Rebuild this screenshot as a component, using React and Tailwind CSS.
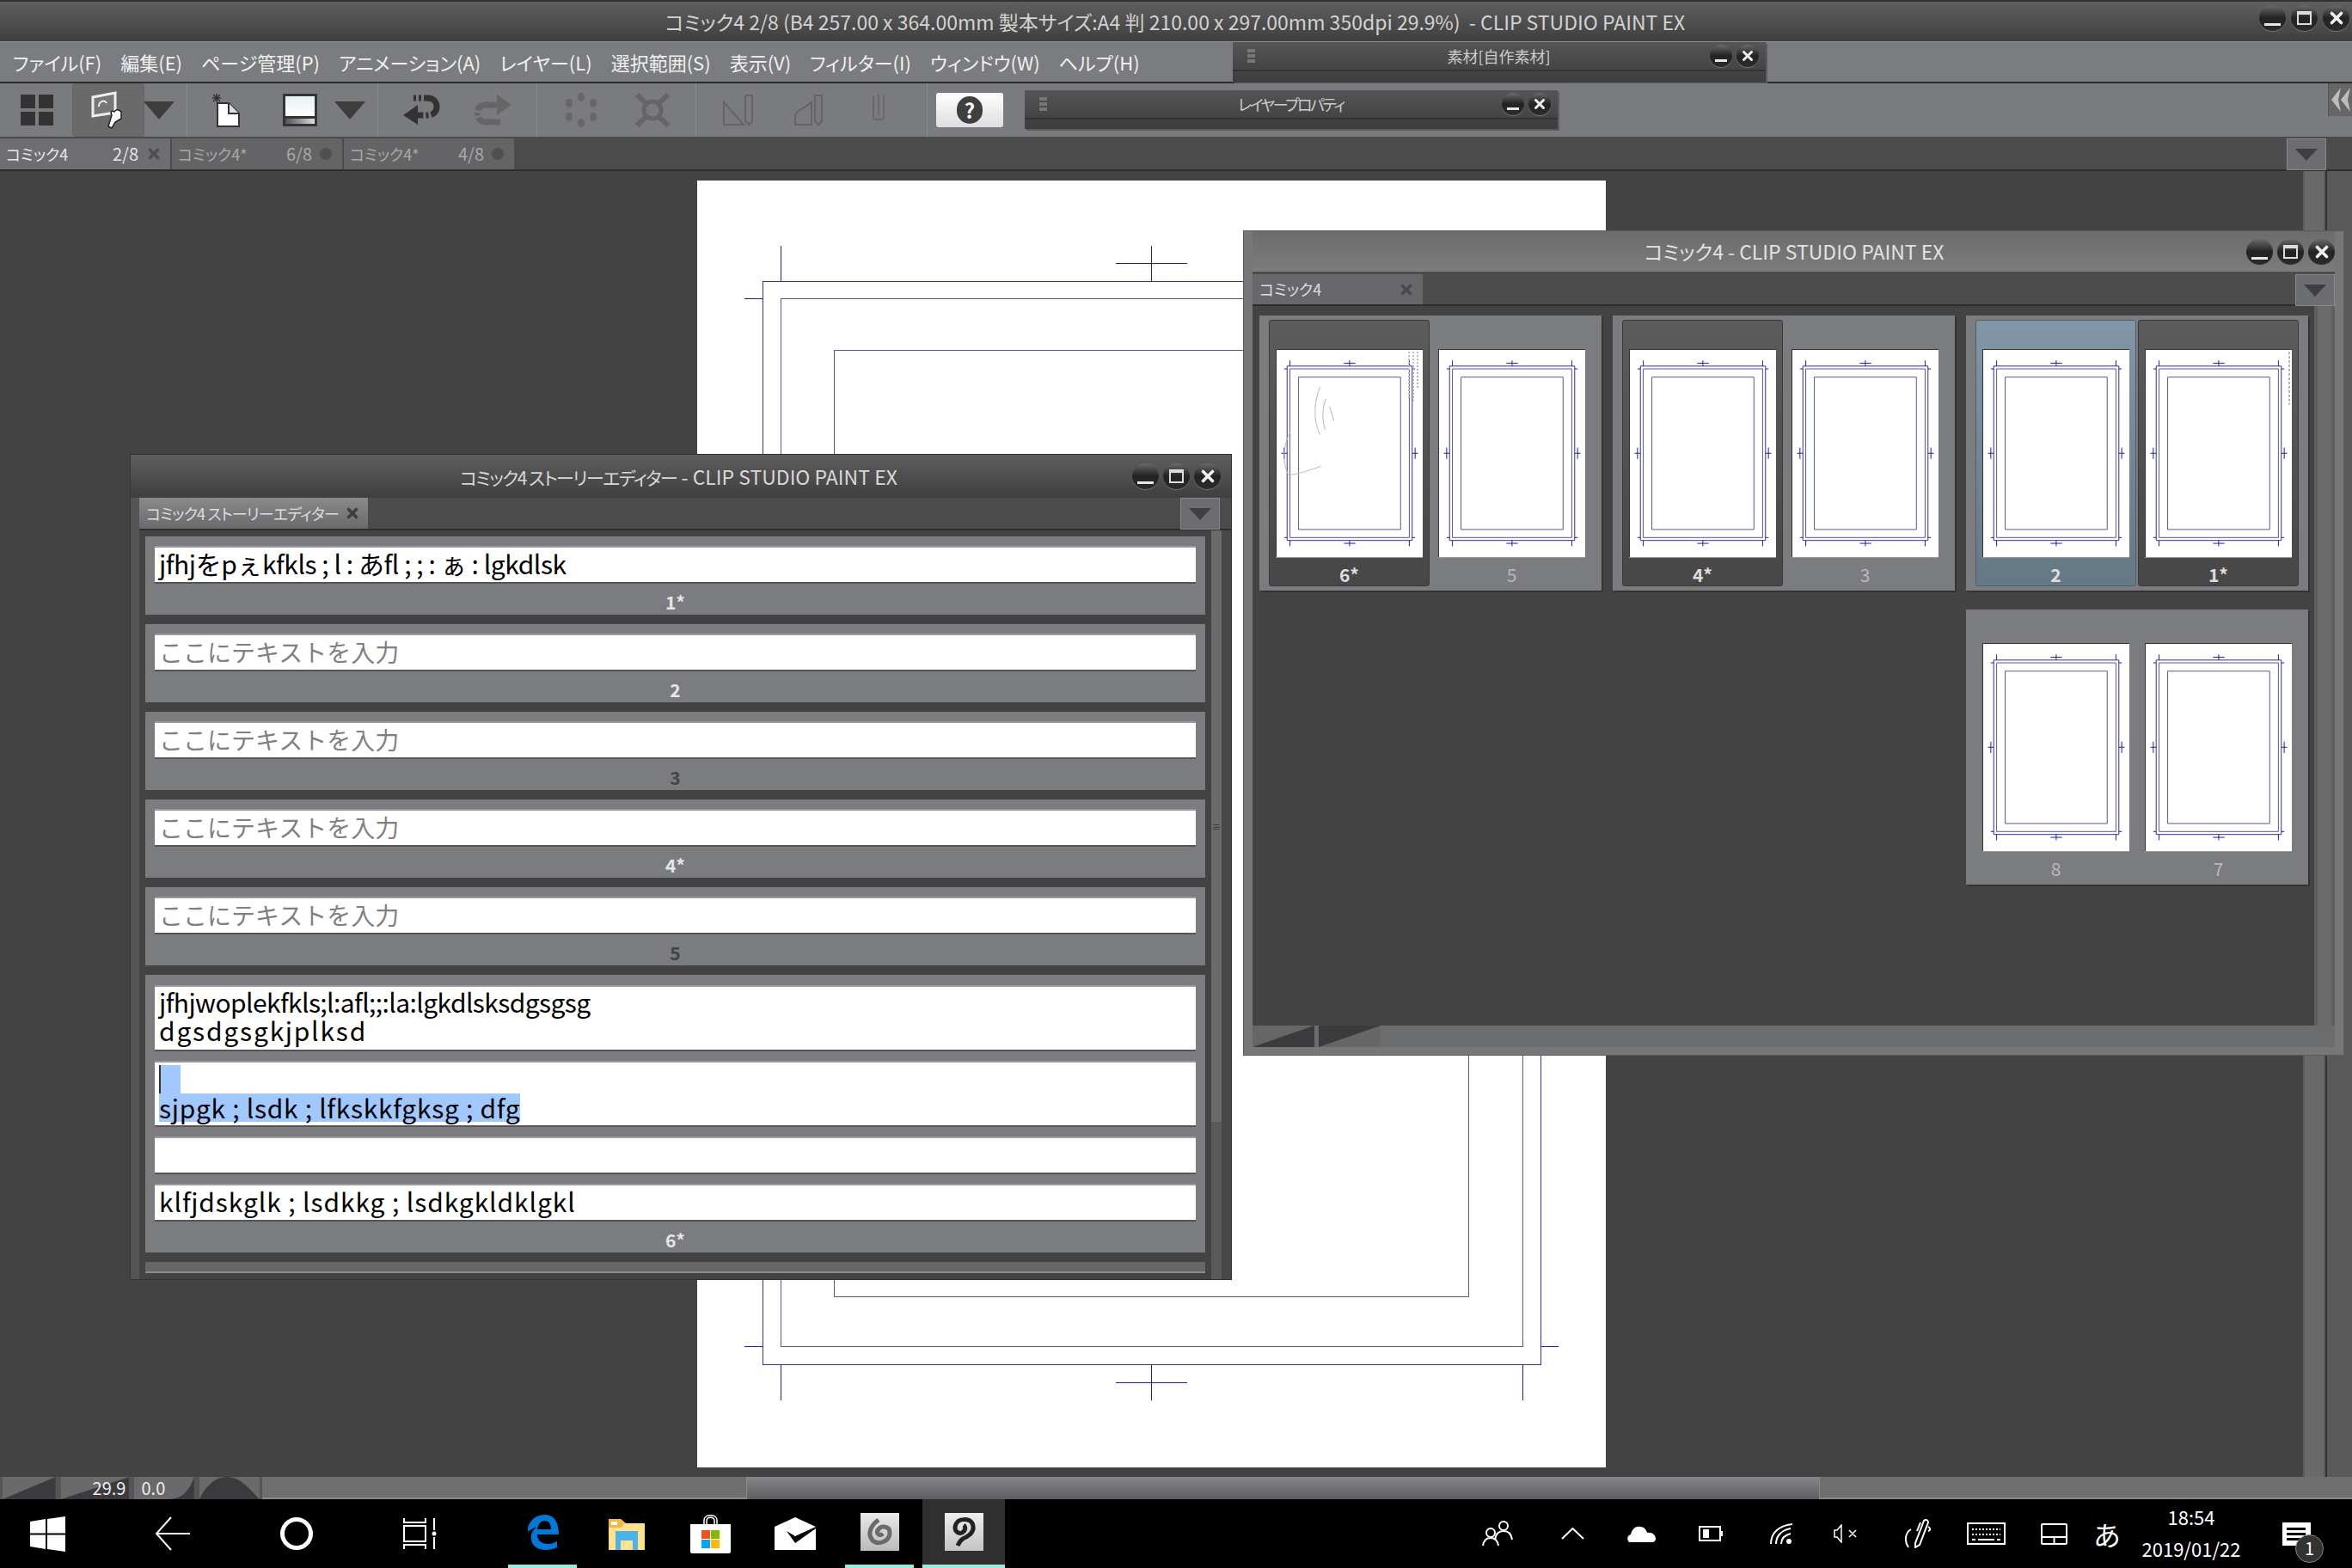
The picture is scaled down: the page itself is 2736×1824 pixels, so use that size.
import { X } from "lucide-react";

const menus = ["ファイル(F)", "編集(E)", "ページ管理(P)", "アニメーション(A)", "レイヤー(L)", "選択範囲(S)", "表示(V)", "フィルター(I)", "ウィンドウ(W)", "ヘルプ(H)"];

const storyPages = [
  { label: "1*", bright: true, text: "jfhjをpぇkfkls ; l : あfl ; ; : ぁ : lgkdlsk" },
  { label: "2", bright: true },
  { label: "3" },
  { label: "4*", bright: true },
  { label: "5" },
];

const spreads = [
  [{ n: "6*", tone: "dark", scribble: true }, { n: "5" }],
  [{ n: "4*", tone: "dark" }, { n: "3" }],
  [{ n: "2", tone: "blue" }, { n: "1*", tone: "dark", noise: true }],
];

function PageMarks() {
  const tick = { stroke: "#20208f", strokeWidth: 1, vectorEffect: "non-scaling-stroke", fill: "none" };
  const mid = { stroke: "#58588c", strokeWidth: 1, vectorEffect: "non-scaling-stroke", fill: "none" };
  return (
    <svg viewBox="0 0 1057 1497" preserveAspectRatio="none" className="absolute inset-0 h-full w-full" shapeRendering="crispEdges">
      <rect x="76" y="117" width="905" height="1260" {...tick} stroke="#30309a" />
      <rect x="97" y="137" width="863" height="1219" {...mid} />
      <rect x="159" y="197" width="738" height="1101" {...mid} />
      <path {...tick} d="M97 76V117M960 76V117M97 1377V1419M960 1377V1419" />
      <path {...tick} d="M55 137H76M981 137H1002M55 1356H76M981 1356H1002" />
      <path {...tick} d="M528 76V117M487 96H570M528 1377V1419M487 1398H570" />
      <path {...tick} d="M55 706V788M34 747H76M1002 706V788M981 747H1023" />
    </svg>
  );
}

function WinBtn({ kind, size = 31 }) {
  const box = size === 31 ? "h-[30px] w-[31px]" : "h-[26px] w-[26px]";
  return (
    <div className={`${box} relative shrink-0 rounded-full bg-linear-to-b from-[#6b6b6b] via-[#232323] to-[#2c2c2c] shadow-[0_1px_1px_#777]`}>
      {kind === "min" && <div className="absolute inset-x-[6px] bottom-[6px] h-[3px] bg-[#e8e8e8]" />}
      {kind === "max" && <div className="absolute inset-[7px] border-2 border-t-[4px] border-[#ddd]" />}
      {kind === "close" && (
        <div className="absolute inset-0 flex items-center justify-center">
          <X size={size === 31 ? 22 : 18} strokeWidth={4} color="#eee" />
        </div>
      )}
    </div>
  );
}

function DropBtn() {
  return (
    <div className="flex h-[37px] w-[46px] items-center justify-center border border-[#88898c] bg-[#6c6d70]">
      <div className="h-0 w-0 border-x-[13px] border-t-[14px] border-x-transparent border-t-[#3f3f3f]" />
    </div>
  );
}

function Triangle() {
  return <div className="h-0 w-0 border-x-[18px] border-t-[21px] border-x-transparent border-t-[#3d3d3d]" />;
}

function Sep() {
  return <div className="h-[62px] w-px bg-[#8a8b8e]" />;
}

function ToolWindow({ title, className, titleClass = "" }) {
  return (
    <div className={`absolute w-[620px] bg-linear-to-b from-[#555] to-[#3d3d3d] shadow-[2px_2px_0_#5c5c5c] ${className}`}>
      <div className="flex h-[34px] items-center border-b-2 border-[#333] pr-[8px] pl-[17px]">
        <div className="flex flex-col gap-[2px]">
          <div className="h-[4px] w-[9px] bg-[#777]" />
          <div className="h-[4px] w-[9px] bg-[#777]" />
          <div className="h-[4px] w-[9px] bg-[#777]" />
        </div>
        <div className={`flex-1 pl-[38px] text-center text-[18px] text-[#ccc] ${titleClass}`}>{title}</div>
        <div className="flex gap-[5px]">
          <WinBtn kind="min" size={26} />
          <WinBtn kind="close" size={26} />
        </div>
      </div>
    </div>
  );
}

function Wedge({ flip }) {
  return (
    <svg viewBox="0 0 70 24" preserveAspectRatio="none" className="absolute inset-0 h-full w-full">
      <polygon points={flip ? "0,0 70,0 0,24" : "0,24 70,0 70,24"} fill="#3b3b3d" />
    </svg>
  );
}

function StoryInput({ tall, children }) {
  return (
    <div
      className={`shrink-0 border-t-2 border-b-2 border-t-[#9a9a9a] border-b-[#555] bg-white pl-[5px] text-[30px] text-black [font-feature-settings:normal] ${tall ? "h-[77px] leading-[33px]" : "h-[44px] leading-[36px]"}`}
    >
      {children}
    </div>
  );
}

function StoryLabel({ children, bright }) {
  return (
    <div className={`text-center text-[21px] leading-[42px] font-bold ${bright ? "text-[#e6e6e6]" : "text-[#444]"}`}>{children}</div>
  );
}

function StoryEditor() {
  return (
    <div className="absolute top-[529px] left-[152px] flex h-[959px] w-[1280px] flex-col bg-[#555] shadow-[0_0_0_1px_#333]">
      <div className="flex h-[50px] items-center justify-between bg-linear-to-b from-[#5e5e5e] to-[#3f3f3f] pr-[12px]">
        <div className="flex-1 pl-[110px] text-center text-[23px] whitespace-nowrap text-[#d8d8d8]">
          <span className="text-[21px] tracking-[-1.5px]">コミック4 ストーリーエディター</span> - CLIP STUDIO PAINT EX
        </div>
        <div className="flex gap-[5px]">
          <WinBtn kind="min" />
          <WinBtn kind="max" />
          <WinBtn kind="close" />
        </div>
      </div>
      <div className="ml-[10px] flex h-[38px] justify-between border-b-2 border-[#2e2e2e] bg-[#4c4c4c] pr-[13px]">
        <div className="flex w-[266px] items-center justify-between bg-linear-to-b from-[#8a8a8c] to-[#6a6a6d] pr-[9px] pl-[8px] text-[18px] whitespace-nowrap text-[#ddd]">
          <span className="tracking-[-0.8px]">コミック4 ストーリーエディター</span>
          <X size={18} strokeWidth={5} color="#3f3f3f" />
        </div>
        <DropBtn />
      </div>
      <div className="ml-[10px] flex flex-1 bg-[#434343]">
        <div className="flex flex-1 flex-col gap-[11px] pt-[7px] pr-[7px] pl-[7px]">
          {storyPages.map((p) => (
            <div key={p.label} className="h-[91px] bg-[#7b7c80] px-[11px] pt-[11px]">
              <StoryInput>
                {p.text ? (
                  <span className="tracking-[-0.45px]">{p.text}</span>
                ) : (
                  <span className="text-[28px] text-[#808080]">ここにテキストを入力</span>
                )}
              </StoryInput>
              <StoryLabel bright={p.bright}>{p.label}</StoryLabel>
            </div>
          ))}
          <div className="flex h-[323px] flex-col gap-[11px] bg-[#7b7c80] px-[11px] pt-[12px]">
            <StoryInput tall>
              <div className="pt-[1px] tracking-[-0.6px]">jfhjwoplekfkls;l:afl;;:la:lgkdlsksdgsgsg</div>
              <div className="tracking-[1.8px]">dgsdgsgkjplksd</div>
            </StoryInput>
            <StoryInput tall>
              <div className="pt-[3px]">
                <div className="h-[33px] w-[25px] border-l-2 border-[#333] bg-[#a1c8ff]" />
                <div className="h-[33px] w-fit bg-[#a1c8ff] tracking-[0.7px]">sjpgk ; lsdk ; lfkskkfgksg ; dfg</div>
              </div>
            </StoryInput>
            <StoryInput />
            <StoryInput>
              <span className="tracking-[0.9px]">klfjdskglk ; lsdkkg ; lsdkgkldklgkl</span>
            </StoryInput>
            <div className="-mt-[11px] shrink-0">
              <StoryLabel bright>6*</StoryLabel>
            </div>
          </div>
          <div className="h-[13px] border-b-2 border-[#8a8a8a] bg-[#666]" />
        </div>
        <div className="flex w-[23px] flex-col border-r-[11px] border-[#484848] bg-[#5a5a5a]">
          <div className="flex h-[688px] items-center justify-center bg-[#6a6a6a] text-[10px] text-[#333]">≡</div>
        </div>
      </div>
    </div>
  );
}

function Thumb({ n, tone, scribble, noise }) {
  const pad =
    tone === "dark"
      ? "bg-linear-to-b from-[#5c5c5c] to-[#474747] border-[#3a3a3a]"
      : tone === "blue"
        ? "bg-linear-to-b from-[#8297a5] to-[#647886] border-[#4f5f68]"
        : "border-transparent";
  return (
    <div className={`h-[310px] w-[187px] rounded-[3px] border px-[7px] pt-[33px] ${pad}`}>
      <div className="relative h-[242px] w-[171px] border-t border-l border-[#333] bg-white shadow-[0_1px_0_#999]">
        <PageMarks />
        {scribble && (
          <svg viewBox="0 0 171 242" className="absolute inset-0 h-full w-full" fill="none" stroke="#b5b5b5" strokeWidth="1">
            <path d="M51 43C43 62 43 84 51 99M58 57C53 68 53 82 57 93M62 66C64 72 66 78 67 83M16 96C7 112 7 135 14 146C24 146 40 140 52 136" />
            <path d="M155 2V55M160 2V60M165 2V45" strokeDasharray="2 2" strokeWidth="2" />
          </svg>
        )}
        {noise && (
          <svg viewBox="0 0 171 242" className="absolute inset-0 h-full w-full" fill="none" stroke="#b5b5b5">
            <path d="M168 2V64" strokeDasharray="3 2" strokeWidth="2" />
          </svg>
        )}
      </div>
      <div className={`mt-[6px] text-center text-[21px] leading-[28px] ${tone ? "font-bold text-[#ddd]" : "text-[#b8b8b8]"}`}>{n}</div>
    </div>
  );
}

function Spread({ pages }) {
  return (
    <div className="flex h-[320px] w-[398px] gap-[2px] bg-[#7b7c80] pt-[5px] pl-[11px] shadow-[2px_2px_0_#333]">
      {pages.map((p) => (
        <Thumb key={p.n} {...p} />
      ))}
    </div>
  );
}

function PageManager() {
  return (
    <div className="absolute top-[269px] left-[1447px] flex h-[958px] w-[1279px] flex-col bg-[#777] pr-[10px] pb-[9px] pl-[10px] shadow-[0_0_0_1px_#5a5a5a]">
      <div className="flex h-[47px] items-center bg-linear-to-b from-[#6c6c6c] to-[#7c7c7c]">
        <div className="flex-1 pl-[104px] text-center text-[23px] text-[#e2e2e2]">コミック4 - CLIP STUDIO PAINT EX</div>
        <div className="flex gap-[5px]">
          <WinBtn kind="min" />
          <WinBtn kind="max" />
          <WinBtn kind="close" />
        </div>
      </div>
      <div className="flex h-[40px] justify-between border-b-2 border-[#2e2e2e] bg-[#4c4c4c] pt-[3px]">
        <div className="flex w-[198px] items-center justify-between bg-[#68686c] pr-[10px] pl-[8px] text-[18px] text-[#ddd]">
          <span>コミック4</span>
          <X size={18} strokeWidth={5} color="#4a4a4a" />
        </div>
        <DropBtn />
      </div>
      <div className="flex flex-1">
        <div className="flex flex-1 flex-col gap-[22px] bg-[#434343] pt-[11px] pl-[8px]">
          <div className="flex gap-[13px]">
            {spreads.map((s) => (
              <Spread key={s[0].n} pages={s} />
            ))}
          </div>
          <div className="flex justify-end pr-[7px]">
            <Spread pages={[{ n: "8" }, { n: "7" }]} />
          </div>
        </div>
        <div className="w-[24px] border-x-4 border-[#5f5f5f] bg-[#6b6b6b]" />
      </div>
      <div className="flex h-[25px] bg-[#6b6c6e]">
        <div className="relative h-full w-[72px] bg-[#666]">
          <Wedge />
        </div>
        <div className="relative ml-[5px] h-full w-[72px] bg-[#666]">
          <Wedge flip />
        </div>
      </div>
    </div>
  );
}

function Toolbar() {
  return (
    <div className="relative flex h-[62px] items-center bg-[#7a7b7f] pl-[24px]">
      <div className="grid grid-cols-2 gap-[4px]">
        {[0, 1, 2, 3].map((i) => (
          <div key={i} className="h-[16px] w-[17px] bg-[#333]" />
        ))}
      </div>
      <div className="ml-[22px] flex h-[62px] w-[84px] items-center justify-center rounded-[3px] border border-[#666] bg-[#6a6a6a]">
        <svg width="40" height="44" viewBox="0 0 40 44">
          <path d="M2 7L28 2V25L2 29Z" fill="#777" stroke="#eee" strokeWidth="3" />
          <path d="M9 18C9 11 16 10 18 14" fill="none" stroke="#eee" strokeWidth="2" />
          <path d="M20 41L24 28C22 24 24 22 27 24C29 20 33 22 35 24L35 32L28 36L24 43Z" fill="#fff" stroke="#222" strokeWidth="1.5" />
        </svg>
      </div>
      <div className="flex w-[34px] justify-center">
        <Triangle />
      </div>
      <div className="ml-[15px]">
        <Sep />
      </div>
      <svg className="ml-[27px]" width="36" height="40" viewBox="0 0 36 40">
        <path d="M8 12H21L33 24V39H8Z" fill="#fff" stroke="#333" strokeWidth="2" />
        <path d="M21 12V24H33" fill="#ddd" stroke="#333" strokeWidth="2" />
        <path d="M7 1V11M2 6H12M3 2L11 10M11 2L3 10" stroke="#333" strokeWidth="1.5" />
      </svg>
      <div className="ml-[48px] flex h-[38px] w-[40px] flex-col bg-[#333] p-[3px]">
        <div className="flex-1 bg-linear-to-b from-[#e6f1f5] to-white" />
        <div className="mt-[3px] h-[6px] bg-linear-to-r from-[#555] to-[#ddd]" />
      </div>
      <div className="ml-[20px]">
        <Triangle />
      </div>
      <div className="ml-[14px]">
        <Sep />
      </div>
      <svg className="ml-[27px]" width="46" height="36" viewBox="0 0 46 36">
        <path d="M14 4H30C38 4 41 9 41 14C41 20 37 24 30 24H17" fill="none" stroke="#333" strokeWidth="7" strokeDasharray="3 3 3 3 30 0" />
        <path d="M19 12L2 24L19 35Z" fill="#333" />
      </svg>
      <svg className="ml-[39px]" width="44" height="36" viewBox="0 0 44 36">
        <path d="M30 12H14C6 12 3 17 3 22C3 28 7 32 14 32H30" fill="none" stroke="#656565" strokeWidth="7" strokeDasharray="26 0 3 3 3 3" />
        <path d="M26 0L43 12L26 24Z" fill="#656565" />
      </svg>
      <div className="ml-[28px]">
        <Sep />
      </div>
      <svg className="ml-[32px]" width="38" height="40" viewBox="0 0 38 40" fill="#666">
        <ellipse cx="19" cy="5" rx="4" ry="5" />
        <ellipse cx="19" cy="35" rx="4" ry="5" />
        <ellipse cx="5" cy="12" rx="4" ry="5" />
        <ellipse cx="33" cy="12" rx="4" ry="5" />
        <ellipse cx="5" cy="28" rx="4" ry="5" />
        <ellipse cx="33" cy="28" rx="4" ry="5" />
      </svg>
      <svg className="ml-[44px]" width="40" height="40" viewBox="0 0 40 40" fill="none" stroke="#656565" strokeWidth="5">
        <circle cx="20" cy="20" r="10" />
        <path d="M2 2L12 12M38 2L28 12M2 38L12 28M38 38L28 28" strokeWidth="6" />
      </svg>
      <div className="ml-[30px]">
        <Sep />
      </div>
      <svg className="ml-[31px]" width="36" height="38" viewBox="0 0 36 38" fill="none" stroke="#656565" strokeWidth="2">
        <path d="M1 36V10L24 36ZM26 2H34V32L30 36L26 32Z" />
      </svg>
      <svg className="ml-[47px]" width="36" height="38" viewBox="0 0 36 38" fill="none" stroke="#656565" strokeWidth="2">
        <path d="M1 36V26C1 20 10 18 20 10V36ZM24 2H32V32L28 36L24 32Z" />
      </svg>
      <svg className="ml-[54px]" width="16" height="40" viewBox="0 0 16 40" fill="none" stroke="#696969" strokeWidth="2">
        <path d="M2 3V28C2 32 14 32 14 28V3M8 2V26" />
      </svg>
      <div className="ml-[48px]">
        <Sep />
      </div>
      <div className="ml-[10px] flex h-[40px] w-[78px] items-center justify-center rounded-[3px] bg-linear-to-b from-white to-[#dedede]">
        <div className="flex h-[32px] w-[30px] items-center justify-center rounded-full bg-[#3f3f3f] text-[24px] leading-none font-bold text-white">?</div>
      </div>
      <ToolWindow title="レイヤープロパティ" titleClass="tracking-[-2.5px]" className="top-[8px] left-[1192px] h-[45px]" />
      <div className="absolute top-0 right-0 flex h-[38px] w-[28px] items-center justify-center border-l border-[#555] bg-[#666]">
        <svg width="22" height="28" viewBox="0 0 22 28" fill="#bdbdbd">
          <path d="M11 0L0 14L11 28L8 14ZM22 0L11 14L22 28L19 14Z" />
        </svg>
      </div>
    </div>
  );
}

function TabBar() {
  const tabs = [
    { name: "コミック4", page: "2/8", on: true },
    { name: "コミック4*", page: "6/8" },
    { name: "コミック4*", page: "4/8" },
  ];
  return (
    <div className="flex h-[40px] justify-between border-b-2 border-[#2e2e2e] bg-[#4c4c4c] pt-[2px] pr-[30px]">
      <div className="flex gap-[2px]">
        {tabs.map((t, i) => (
          <div key={i} className={`flex w-[198px] items-center pr-[10px] pl-[7px] ${t.on ? "bg-[#6e6e72] text-[#e6e6e6]" : "bg-[#646466] text-[#a8a8a8]"}`}>
            <span className="flex-1 text-[18px]">{t.name}</span>
            <span className="mr-[9px] text-[20px]">{t.page}</span>
            {t.on ? <X size={18} strokeWidth={5} color="#4f4f4f" /> : <div className="mr-[2px] h-[14px] w-[14px] rounded-full bg-[#4f4f4f]" />}
          </div>
        ))}
      </div>
      <DropBtn />
    </div>
  );
}

function BottomBar() {
  return (
    <div className="flex h-[26px] bg-[#6b6c6e]">
      <div className="flex h-full w-[305px] gap-[6px] bg-[#555] px-[3px]">
        <div className="relative w-[62px] bg-[#6a6a6c]">
          <Wedge />
        </div>
        <div className="relative flex w-[80px] items-center justify-end bg-[#6a6a6c] pr-[4px] text-[20px] text-[#eee]">
          <Wedge />
          <span className="relative">29.9</span>
        </div>
        <div className="relative flex w-[70px] items-center bg-[#6a6a6c] pl-[8px] text-[20px] text-[#eee]">
          <svg viewBox="0 0 70 24" preserveAspectRatio="none" className="absolute inset-0 h-full w-full">
            <path d="M40 24C60 24 66 10 70 0V24Z" fill="#3b3b3d" />
          </svg>
          <span className="relative">0.0</span>
        </div>
        <div className="relative w-[70px] bg-[#6a6a6c]">
          <svg viewBox="0 0 70 24" preserveAspectRatio="none" className="absolute inset-0 h-full w-full">
            <path d="M0 24C8 8 20 0 32 0C48 0 60 14 70 24Z" fill="#3b3b3d" />
          </svg>
        </div>
      </div>
      <div className="h-full w-[563px] border-b-2 border-[#8a8a8a] bg-[#6e6e70]" />
      <div className="h-full w-[1249px] border-x border-[#8a8a8a] bg-linear-to-b from-[#858689] to-[#5e5e60]" />
      <div className="h-full flex-1 border-b-2 border-[#8a8a8a] bg-[#6e6e70]" />
    </div>
  );
}

function Taskbar() {
  return (
    <div className="flex h-[80px] items-center bg-black text-white [font-feature-settings:normal]">
      <svg className="ml-[35px]" width="41" height="41" viewBox="0 0 41 41" fill="#fff">
        <path d="M0 6L18 3V19.5H0ZM20 3L41 0V19.5H20ZM0 21.5H18V38L0 35ZM20 21.5H41V41L20 38Z" />
      </svg>
      <svg className="ml-[104px]" width="41" height="40" viewBox="0 0 41 40" fill="none" stroke="#fff" strokeWidth="2">
        <path d="M19 1L2 20L19 39M2 20H41" />
      </svg>
      <div className="ml-[105px] h-[38px] w-[38px] rounded-full border-[5px] border-white" />
      <svg className="ml-[105px]" width="40" height="38" viewBox="0 0 40 38" fill="none" stroke="#fff" strokeWidth="2">
        <path d="M1 1V6H26V1M1 37V32H26V37M1 10H26V28H1ZM36 1V15M36 23V37" />
        <circle cx="36" cy="19" r="2.5" fill="#fff" stroke="none" />
      </svg>
      <div className="relative ml-[82px] flex h-[80px] w-[80px] items-center justify-center border-b-4 border-[#97ecdb]">
        <svg width="40" height="42" viewBox="0 0 40 42" fill="#0078d7">
          <path d="M3 16C6 6 14 1 23 1C33 1 39 9 39 24H14C14 31 19 35 26 35C30 35 34 34 37 32V39C33 41 29 42 24 42C11 42 5 33 7 24C8 20 11 17 14 15C11 16 6 18 3 21ZM14 18H30C30 12 27 8 23 8C18 8 15 12 14 18Z" />
        </svg>
      </div>
      <svg className="ml-[37px]" width="42" height="38" viewBox="0 0 42 38">
        <path d="M0 2H14L20 7H42V38H0Z" fill="#ffe28f" />
        <path d="M0 2H14L19 7L14 12H0Z" fill="#f5b942" />
        <rect x="3" y="5" width="7" height="4" fill="#fff" />
        <path d="M8 16H34V38H28V27H14V38H8Z" fill="#4db4e6" />
      </svg>
      <svg className="ml-[53px]" width="47" height="46" viewBox="0 0 47 46">
        <path d="M16 12V7C16 0 31 0 31 7V12M19 12V8C19 3 28 3 28 8V12" fill="none" stroke="#fff" strokeWidth="1.5" />
        <path d="M0 12H47V44C47 45 46 46 45 46H2C1 46 0 45 0 44Z" fill="#fff" />
        <rect x="13" y="19" width="10" height="10" fill="#f25022" />
        <rect x="24" y="19" width="10" height="10" fill="#7fba00" />
        <rect x="13" y="30" width="10" height="10" fill="#00a4ef" />
        <rect x="24" y="30" width="10" height="10" fill="#ffb900" />
      </svg>
      <svg className="ml-[51px]" width="48" height="38" viewBox="0 0 48 38" fill="#fff">
        <path d="M0 11L24 0L48 11L24 22L14 16L24 30L48 13V38H0Z" />
      </svg>
      <div className="ml-[34px] flex h-[80px] w-[80px] items-center justify-center border-b-4 border-[#97ecdb]">
        <div className="flex h-[44px] w-[45px] items-center justify-center bg-linear-to-b from-[#e8e8e8] to-[#bbb]">
          <svg width="32" height="34" viewBox="0 0 32 34" fill="none" stroke="#6b6b6b" strokeWidth="5">
            <path d="M15 3C5 10 2 20 8 27C15 33 28 28 28 18C28 10 18 9 14 15C12 20 17 22 20 19" />
          </svg>
        </div>
      </div>
      <div className="ml-[10px] flex h-[80px] w-[96px] items-center justify-center border-b-4 border-[#97ecdb] bg-[#2f2f2f]">
        <div className="flex h-[44px] w-[45px] items-center justify-center bg-linear-to-b from-[#eee] to-[#c4c4c4]">
          <svg width="30" height="36" viewBox="0 0 30 36" fill="none" stroke="#222" strokeWidth="5">
            <path d="M8 34C10 30 12 26 18 24C25 20 28 15 25 8C21 2 9 2 6 9C3 16 8 21 13 19C17 17 18 12 15 10" />
          </svg>
        </div>
      </div>
      <div className="flex flex-1 items-center justify-end">
        <svg className="mr-[56px]" width="36" height="30" viewBox="0 0 36 30" fill="none" stroke="#fff" strokeWidth="2">
          <circle cx="25" cy="6" r="5" />
          <path d="M15 22C16 15 19 12 25 12C31 12 34 15 35 22" />
          <circle cx="10" cy="14" r="5" />
          <path d="M1 29C2 23 5 20 10 20C15 20 18 23 19 29" />
        </svg>
        <svg className="mr-[50px]" width="27" height="14" viewBox="0 0 27 14" fill="none" stroke="#fff" strokeWidth="2">
          <path d="M1 13L13.5 1L26 13" />
        </svg>
        <svg className="mr-[50px]" width="33" height="19" viewBox="0 0 33 19" fill="#fff">
          <path d="M2 19C-1 15 0 11 4 10C5 4 10 0 15 1C19 1 22 4 23 8C29 7 33 11 33 15C33 17 32 18 30 19Z" />
        </svg>
        <svg className="mr-[54px]" width="29" height="18" viewBox="0 0 29 18" fill="none" stroke="#fff" strokeWidth="2">
          <rect x="1" y="1" width="24" height="16" />
          <rect x="5" y="4" width="7" height="10" fill="#fff" stroke="none" />
          <path d="M27 6V12" />
        </svg>
        <svg className="mr-[47px]" width="27" height="24" viewBox="0 0 27 24" fill="none" stroke="#fff" strokeWidth="2">
          <path d="M1 24C1 12 9 3 26 1M7 24C7 16 12 8 24 6M13 24C13 19 16 14 24 12" />
          <circle cx="22" cy="21" r="3" fill="#fff" stroke="none" />
        </svg>
        <svg className="mr-[51px]" width="30" height="22" viewBox="0 0 30 22" fill="none" stroke="#fff" strokeWidth="1.5">
          <path d="M9 1V21L4 15H1V7H4ZM18 7L26 15M26 7L18 15" />
        </svg>
        <svg className="mr-[42px]" width="32" height="34" viewBox="0 0 32 34" fill="none" stroke="#fff" strokeWidth="2">
          <path d="M14 28L24 2C26 0 29 1 29 4L19 30L14 33ZM20 4L16 14M29 9C32 11 32 13 29 14M9 12C2 16 1 26 6 33" />
        </svg>
        <svg className="mr-[41px]" width="45" height="26" viewBox="0 0 45 26" fill="none" stroke="#fff" strokeWidth="2">
          <rect x="1" y="1" width="43" height="24" />
          <path d="M6 8H39M6 14H39" strokeDasharray="2 2" />
          <path d="M13 20H32M6 20H10M35 20H39" />
        </svg>
        <svg className="mr-[30px]" width="31" height="25" viewBox="0 0 31 25" fill="none" stroke="#fff" strokeWidth="2">
          <rect x="1" y="1" width="29" height="23" rx="1" />
          <path d="M1 16H30M15.5 16V24" />
        </svg>
        <span className="mr-[21px] text-[32px] leading-none">あ</span>
        <div className="mr-[45px] -mt-[3px] flex w-[122px] flex-col items-center gap-[11px] text-[22px] leading-[26px]">
          <span>18:54</span>
          <span>2019/01/22</span>
        </div>
        <div className="relative mr-[48px] h-[27px] w-[33px] bg-white">
          <div className="absolute top-[6px] left-[5px] h-[3px] w-[22px] bg-black" />
          <div className="absolute top-[12px] left-[5px] h-[3px] w-[22px] bg-black" />
          <div className="absolute top-[18px] left-[5px] h-[3px] w-[22px] bg-black" />
          <div className="absolute top-[14px] left-[15px] flex h-[33px] w-[33px] items-center justify-center rounded-full border border-[#888] bg-[#333] text-[20px]">1</div>
        </div>
      </div>
    </div>
  );
}

export default function App() {
  return (
    <div className="relative flex h-[1824px] w-[2736px] flex-col overflow-hidden bg-[#434343] font-['Noto_Sans_CJK_JP','Liberation_Sans',sans-serif] [font-feature-settings:'palt']">
      <div className="relative flex h-[48px] items-center justify-center border-t-2 border-[#333] bg-linear-to-b from-[#606060] to-[#3f3f3f] text-[23px] text-[#d2d2d2]">
        <span className="pr-[2px]">コミック4 2/8 (B4 257.00 x 364.00mm 製本サイズ:A4 判 210.00 x 297.00mm 350dpi 29.9%)&nbsp; - CLIP STUDIO PAINT EX</span>
        <div className="absolute top-[4px] right-[3px] flex gap-[6px]">
          <WinBtn kind="min" />
          <WinBtn kind="max" />
          <WinBtn kind="close" />
        </div>
      </div>
      <div className="relative flex h-[49px] items-center gap-[22px] border-t border-b-2 border-t-[#8d8e90] border-b-[#2c2c2c] bg-[#7b7c80] pl-[15px] text-[22px] text-[#f0f0f0]">
        {menus.map((m) => (
          <span key={m}>{m}</span>
        ))}
        <ToolWindow title="素材[自作素材]" className="top-0 left-[1434px] h-[47px]" />
      </div>
      <Toolbar />
      <TabBar />
      <div className="flex min-h-0 flex-1">
        <div className="flex flex-1 items-center justify-center">
          <div className="relative h-[1497px] w-[1057px] shrink-0 bg-white">
            <PageMarks />
          </div>
        </div>
        <div className="w-[26px] border-x-2 border-[#5c5c5c] bg-[#6a6a6a]" />
        <div className="w-[31px] border-l-2 border-[#333] bg-[#595959]" />
      </div>
      <BottomBar />
      <Taskbar />
      <StoryEditor />
      <PageManager />
    </div>
  );
}
